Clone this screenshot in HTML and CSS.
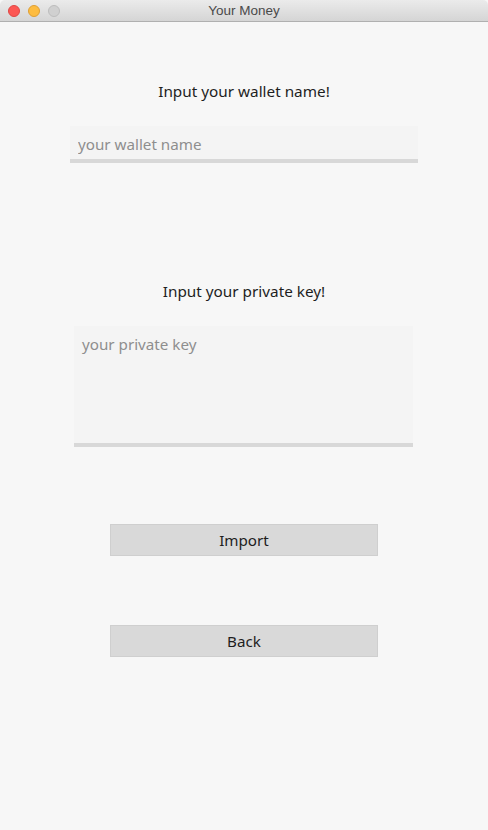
FILE: index.html
```html
<!DOCTYPE html>
<html>
<head>
<meta charset="utf-8">
<title>Your Money</title>
<link rel="stylesheet" href="styles.css">
</head>
<body>
<div class="window">
  <div class="titlebar">
    <div class="lights">
      <span class="light red"></span>
      <span class="light yellow"></span>
      <span class="light gray"></span>
    </div>
    <div class="title">Your Money</div>
  </div>
  <main class="content">
    <div class="label label-wallet">Input your wallet name!</div>
    <input class="field field-name" type="text" placeholder="your wallet name">
    <div class="label label-key">Input your private key!</div>
    <textarea class="field field-key" placeholder="your private key"></textarea>
    <button class="btn btn-import">Import</button>
    <button class="btn btn-back">Back</button>
  </main>
</div>
</body>
</html>
```
FILE: styles.css
```css
html, body {
  margin: 0;
  padding: 0;
  background: #f7f7f7;
}
.window {
  width: 488px;
  height: 830px;
  display: flex;
  flex-direction: column;
  font-family: "Noto Sans", "Open Sans", sans-serif;
}
.titlebar {
  height: 21px;
  flex: 0 0 21px;
  border-bottom: 1px solid #b0b0b0;
  background: linear-gradient(#ebebeb, #d5d5d5);
  border-radius: 5px 5px 0 0;
  display: flex;
  align-items: center;
  position: relative;
}
.lights {
  display: flex;
  gap: 8px;
  padding-left: 8px;
}
.light {
  width: 12px;
  height: 12px;
  border-radius: 50%;
  box-sizing: border-box;
}
.red { background: #fc5753; border: 1px solid #df4744; }
.yellow { background: #fdbc40; border: 1px solid #de9f34; }
.gray { background: #d0d0d0; border: 1px solid #bdbdbd; }
.title {
  position: absolute;
  left: 0;
  right: 0;
  top: 0;
  line-height: 22px;
  text-align: center;
  font-family: "Liberation Sans", "Noto Sans", sans-serif;
  font-size: 13.5px;
  color: #4a4a4a;
  pointer-events: none;
}
.content {
  display: flex;
  flex-direction: column;
  align-items: center;
}
.label {
  font-size: 15.3px;
  line-height: 20px;
  color: #1e1e1e;
}
.label-wallet { margin-top: 59px; }
.label-key { margin-top: 118px; }
.field {
  box-sizing: border-box;
  border: none;
  border-bottom: 4px solid #d8d8d8;
  background: #f4f4f4;
  font-family: "Noto Sans", "Open Sans", sans-serif;
  font-size: 15.2px;
  color: #333;
  outline: none;
  margin: 0;
}
.field::placeholder { color: #8e8e8e; }
.field-name {
  margin-top: 25px;
  width: 348px;
  height: 37px;
  padding: 3px 8px 0;
}
.field-key {
  margin-top: 25px;
  width: 339px;
  height: 121px;
  padding: 8px 8px;
  resize: none;
  line-height: 20px;
  margin-left: -1px;
}
.btn {
  box-sizing: border-box;
  width: 268px;
  height: 32px;
  background: #d9d9d9;
  border: 1px solid #cfcfcf;
  font-family: "Noto Sans", "Open Sans", sans-serif;
  font-size: 15.2px;
  color: #1e1e1e;
  padding: 0;
  margin: 0;
}
.btn-import { margin-top: 77px; }
.btn-back { margin-top: 69px; }
```
